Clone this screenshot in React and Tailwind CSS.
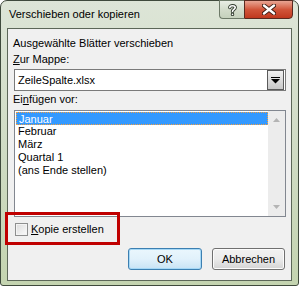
import React from 'react';

const font = { fontFamily: '"Liberation Sans", Arial, sans-serif' };

const months = ['Januar', 'Februar', 'März', 'Quartal 1', '(ans Ende stellen)'];

function CaptionButtons() {
  return (
    <div className="flex -mt-px mr-[5px]">
      <div className="flex h-[19px] w-[25px] items-center justify-center rounded-bl-[4px] border border-[#6d7a68] border-r-0 bg-gradient-to-b from-[#e9eee5] via-[#d3dccb] to-[#c5d1bc]">
        <svg width="9" height="12" viewBox="0 0 9 12">
          <path d="M1.8 3.6 C1.8 1.2 7.2 1.2 7.2 3.6 C7.2 5.4 4.5 5.4 4.5 7.4 M4.5 10.2 V10.4" fill="none" stroke="#2f3a2c" strokeWidth="3.4" strokeLinecap="round" />
          <path d="M1.8 3.6 C1.8 1.2 7.2 1.2 7.2 3.6 C7.2 5.4 4.5 5.4 4.5 7.4 M4.5 10.2 V10.4" fill="none" stroke="#ffffff" strokeWidth="1.6" strokeLinecap="round" />
        </svg>
      </div>
      <div className="flex h-[19px] w-[49px] items-center justify-center rounded-br-[4px] border border-[#5a2a20] bg-gradient-to-b from-[#e8a493] via-[#d1553a] to-[#c0381e]">
        <svg width="14" height="11" viewBox="0 0 14 11">
          <path d="M2 1.5 L12 9.5 M12 1.5 L2 9.5" stroke="#3b1a12" strokeWidth="4.2" strokeLinecap="round" />
          <path d="M2 1.5 L12 9.5 M12 1.5 L2 9.5" stroke="#ffffff" strokeWidth="2.4" strokeLinecap="round" />
        </svg>
      </div>
    </div>
  );
}

function Win7Button({ children, isDefault }) {
  return (
    <div
      className={`flex h-[22px] items-center justify-center rounded-[3px] border text-[11px] text-black ${
        isDefault
          ? 'border-[#3c7fb1] bg-gradient-to-b from-[#eaf6fd] via-[#e1f1fb] to-[#c8e3f5] shadow-[inset_0_0_0_1px_#a6d8f6]'
          : 'border-[#707070] bg-gradient-to-b from-[#f2f2f2] via-[#ebebeb] to-[#d4d4d4] shadow-[inset_0_0_0_1px_#fcfcfc]'
      }`}
    >
      {children}
    </div>
  );
}

export default function App() {
  return (
    <div className="relative h-[286px] w-[300px] bg-white" style={font}>
      <div className="flex h-[286px] w-[299px] flex-col rounded-t-[7px] rounded-b-[3px] border border-[#3f4a3c] bg-gradient-to-b from-[#dde5d7] via-[#d0dcc5] to-[#c4d4b0] px-[6px] pb-[4px]">
        {/* Title bar */}
        <div className="flex h-[27px] items-start justify-between -mx-[6px]">
          <div className="pl-[8px] pt-[5px] text-[11px] leading-[16px] text-black">Verschieben oder kopieren</div>
          <CaptionButtons />
        </div>

        {/* Client area */}
        <div className="flex flex-1 flex-col border border-[#5c6758] bg-[#f0f0f0] pl-[6px] pr-[5px] pt-[6px] text-[11px] leading-[16px] text-black">
          <div className="-ml-px h-[16px] pt-px leading-[15px]">Ausgewählte Blätter verschieben</div>
          <div className="-ml-px h-[16px] pt-px leading-[15px]">
            <span className="underline">Z</span>ur Mappe:
          </div>

          <div className="mt-[2px] flex h-[22px] items-center border border-[#7a7a7a] bg-white">
            <span className="flex-1 pl-[3px]">ZeileSpalte.xlsx</span>
            <div className="mr-px flex h-[20px] w-[17px] items-center justify-center border border-[#5a5a5a] bg-gradient-to-b from-[#f0f0f0] to-[#c8c8c8]">
              <svg width="9" height="7" viewBox="0 0 9 7">
                <rect x="0" y="0" width="9" height="1" fill="#000" />
                <path d="M0 2 H9 L4.5 6.5 Z" fill="#000" />
              </svg>
            </div>
          </div>

          <div className="-ml-px h-[16px] pt-px leading-[15px]">
            Ei<span className="underline">n</span>fügen vor:
          </div>

          <div className="mt-[3px] flex h-[107px] border border-[#828790] bg-white">
            <div className="flex-1 pl-px pt-px">
              {months.map((m, i) => (
                <div
                  key={m}
                  className={`h-[13px] pl-[2px] leading-[13px] ${
                    i === 0 ? 'border border-dotted border-[#f5a040] bg-[#3399ff] pl-[1px] text-white leading-[11px]' : ''
                  }`}
                >
                  {m}
                </div>
              ))}
            </div>
            <div className="flex w-[17px] flex-col justify-between bg-[#ececec] py-[6px]">
              <svg width="17" height="5" viewBox="0 0 17 5">
                <path d="M5 5 L8.5 1 L12 5 Z" fill="#b4b4b4" />
              </svg>
              <svg width="17" height="5" viewBox="0 0 17 5">
                <path d="M5 0 L8.5 4 L12 0 Z" fill="#b4b4b4" />
              </svg>
            </div>
          </div>

          <div className="mt-[6px] flex h-[13px] items-center gap-[3px] pl-px">
            <div className="h-[13px] w-[13px] border border-[#8e8f8f] bg-gradient-to-br from-[#dcdcdc] to-[#fbfbfb] shadow-[inset_0_0_0_1px_#f4f4f4]" />
            <span className="leading-[13px]">
              <span className="underline">K</span>opie erstellen
            </span>
          </div>

          <div className="mt-[12px] flex gap-[10px] pl-[114px] pr-px">
            <div className="w-[74px]">
              <Win7Button isDefault>OK</Win7Button>
            </div>
            <div className="w-[73px]">
              <Win7Button>Abbrechen</Win7Button>
            </div>
          </div>
        </div>
      </div>

      {/* Annotation highlight */}
      <div className="absolute left-[5px] top-[212px] h-[33px] w-[115px] border-[3px] border-[#c00000]" />
    </div>
  );
}
